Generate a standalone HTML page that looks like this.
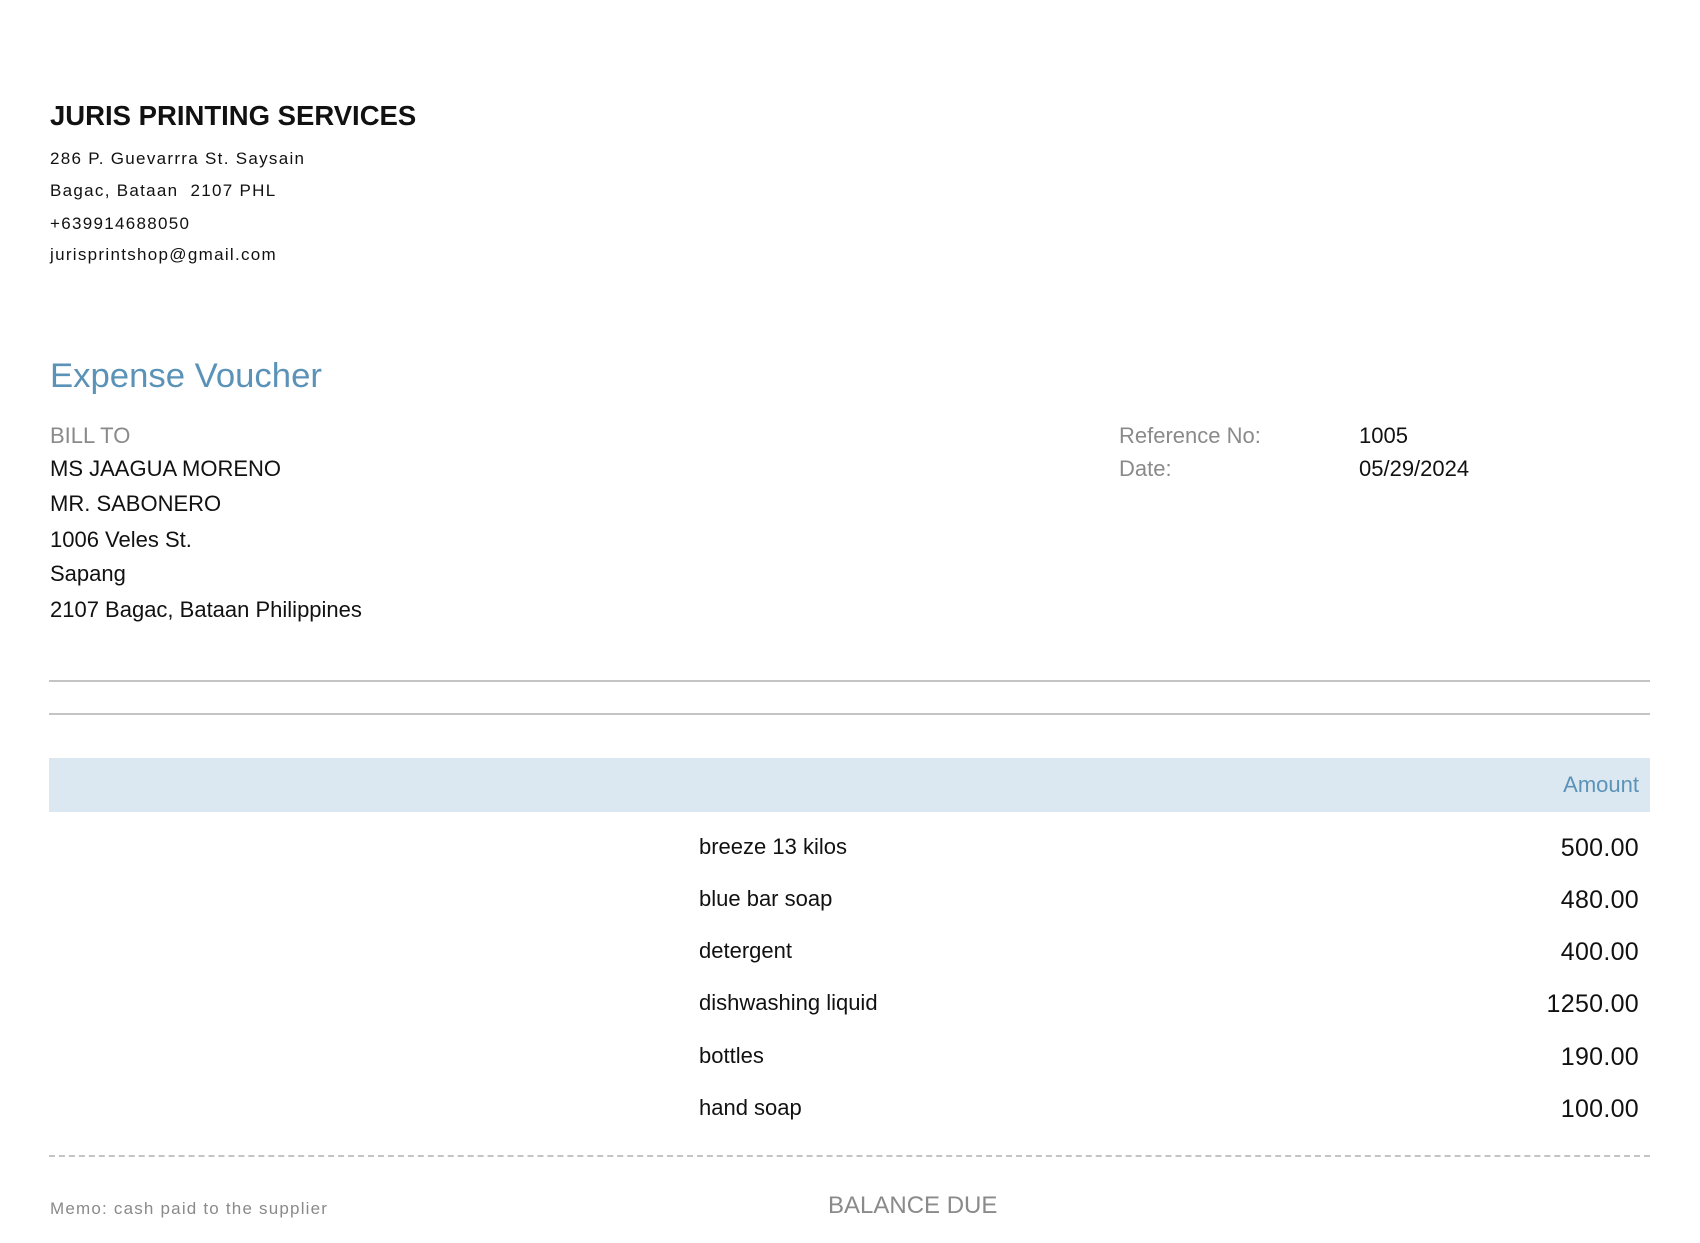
<!DOCTYPE html>
<html><head><meta charset="utf-8"><style>
body{margin:0;width:1700px;height:1243px;background:#fff;font-family:"Liberation Sans",Arial,sans-serif;position:relative;overflow:hidden}
.a{position:absolute;white-space:nowrap;line-height:1}
.addr{font-size:17px;letter-spacing:1.3px;color:#111}
.m{font-size:22px;color:#111;letter-spacing:0}
.g{color:#8a8a8a}
.r{text-align:right;right:61px}
.v{font-size:25px;letter-spacing:0.3px}
.line{position:absolute;left:49px;width:1601px;height:2px;background:#c4c4c4}
</style></head><body>
<div class="a" style="left:50px;top:102px;font-size:27.5px;font-weight:bold;color:#111">JURIS PRINTING SERVICES</div>
<div class="a addr" style="left:50px;top:150px">286 P. Guevarrra St. Saysain</div>
<div class="a addr" style="left:50px;top:182px">Bagac, Bataan&nbsp; 2107 PHL</div>
<div class="a addr" style="left:50px;top:215px">+639914688050</div>
<div class="a addr" style="left:50px;top:246px">jurisprintshop@gmail.com</div>
<div class="a" style="left:50px;top:359px;font-size:34.7px;color:#5b93b8">Expense Voucher</div>
<div class="a m g" style="left:50px;top:425px">BILL TO</div>
<div class="a m" style="left:50px;top:458px">MS JAAGUA MORENO</div>
<div class="a m" style="left:50px;top:493px">MR. SABONERO</div>
<div class="a m" style="left:50px;top:529px">1006 Veles St.</div>
<div class="a m" style="left:50px;top:563px">Sapang</div>
<div class="a m" style="left:50px;top:599px">2107 Bagac, Bataan Philippines</div>
<div class="a m g" style="left:1119px;top:425px">Reference No:</div>
<div class="a m" style="left:1359px;top:425px">1005</div>
<div class="a m g" style="left:1119px;top:458px">Date:</div>
<div class="a m" style="left:1359px;top:458px">05/29/2024</div>
<div class="line" style="top:680px"></div>
<div class="line" style="top:713px"></div>
<div style="position:absolute;left:49px;top:758px;width:1601px;height:54px;background:#dce8f1"></div>
<div class="a m r" style="top:774px;color:#5b93b8">Amount</div>
<div class="a m" style="left:699px;top:836px">breeze 13 kilos</div><div class="a m r v" style="top:836px">500.00</div>
<div class="a m" style="left:699px;top:888px">blue bar soap</div><div class="a m r v" style="top:888px">480.00</div>
<div class="a m" style="left:699px;top:940px">detergent</div><div class="a m r v" style="top:940px">400.00</div>
<div class="a m" style="left:699px;top:992px">dishwashing liquid</div><div class="a m r v" style="top:992px">1250.00</div>
<div class="a m" style="left:699px;top:1045px">bottles</div><div class="a m r v" style="top:1045px">190.00</div>
<div class="a m" style="left:699px;top:1097px">hand soap</div><div class="a m r v" style="top:1097px">100.00</div>
<div style="position:absolute;left:49px;top:1155px;width:1601px;border-top:2px dashed #c4c4c4"></div>
<div class="a g" style="left:50px;top:1200px;font-size:17px;letter-spacing:1.2px">Memo: cash paid to the supplier</div>
<div class="a g" style="left:828px;top:1194px;font-size:24px">BALANCE DUE</div>
</body></html>
